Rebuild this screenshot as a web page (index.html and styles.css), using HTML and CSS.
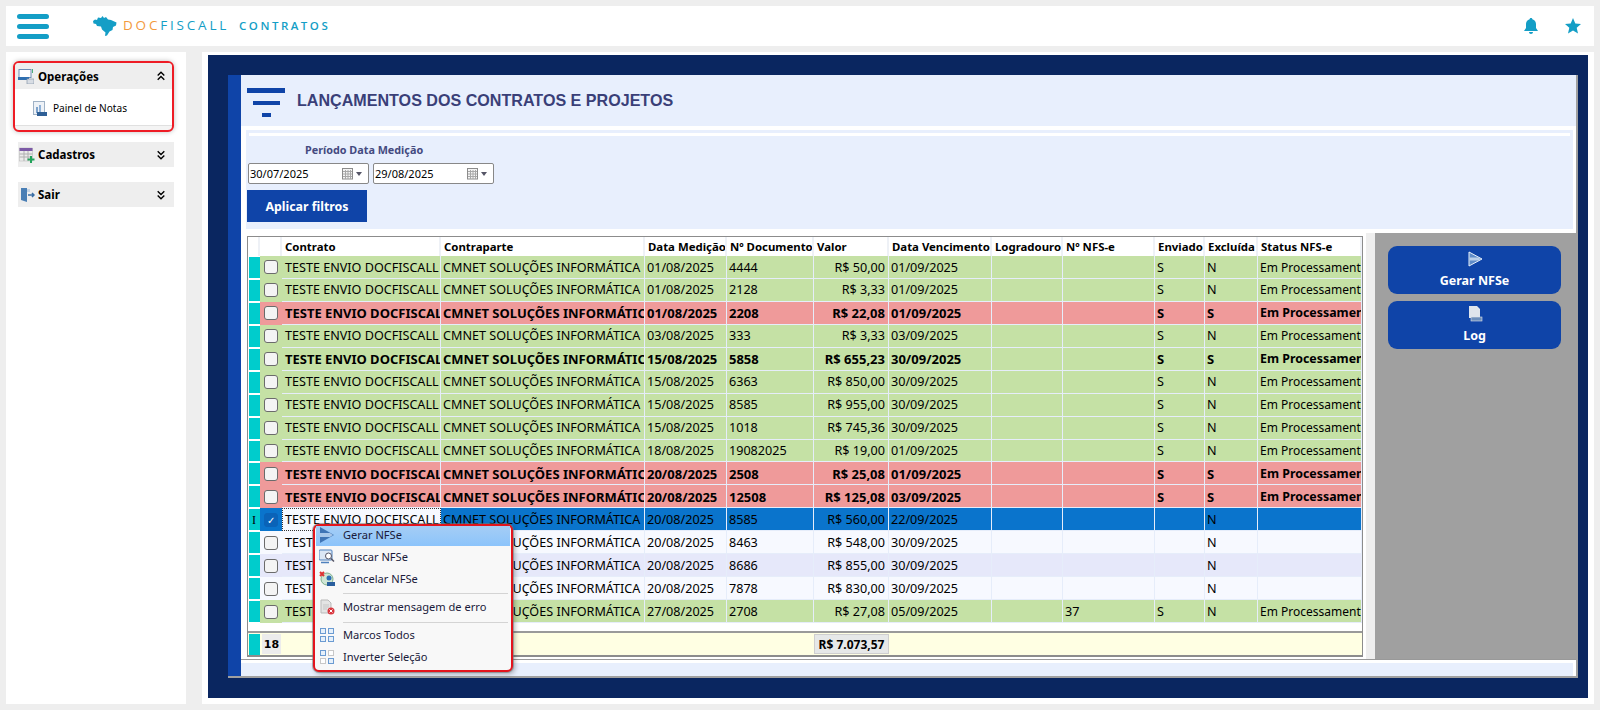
FILE: index.html
```html
<!DOCTYPE html>
<html lang="pt-BR">
<head>
<meta charset="utf-8">
<title>DocFiscall Contratos</title>
<link rel="stylesheet" href="styles.css">
</head>
<body>
<header class="topbar">
  <div class="burger"><span></span><span></span><span></span></div>
  <svg class="brazil" viewBox="0 0 24 20"><path fill="#149ec6" d="M0 5 2 3.500 4 4 5 1.500 8 2 9.500 0 11 2 13 1 15 3.500 18 4 23.500 6.500 23 9.500 20 11 19.500 14 16.500 15.500 14 19.500 12 20 12.500 16.500 9 13.500 8 10.500 4 10 3 8 .5 7.500Z"/></svg>
  <div class="brand"><span class="orange">DOC</span>FISCALL</div>
  <div class="brand sub">CONTRATOS</div>
  <div class="top-icons">
    <svg class="ticon" viewBox="0 0 16 16"><path fill="#149ec6" d="M8 0c.8 0 1.300.5 1.400 1.200C11.600 1.800 13 3.700 13 6v4l2 3H1l2-3V6c0-2.300 1.400-4.200 3.600-4.800C6.700.5 7.200 0 8 0ZM6 14h4c0 1.100-.9 2-2 2s-2-.9-2-2Z"/></svg>
    <svg class="ticon" viewBox="0 0 16 16"><path fill="#149ec6" d="M8 0 10.300 5.400 16 6 11.700 9.800 13 15.600 8 12.600 3 15.600 4.300 9.800 0 6 5.700 5.400Z"/></svg>
  </div>
</header>
<div class="body">
  <aside class="side">
    <div class="side-group">
      <div class="side-head">
        <svg class="sicon" viewBox="0 0 16 16"><rect x="1" y="1.500" width="12" height="8" fill="#fff" stroke="#6f8db5"/><rect x="0" y="9" width="11" height="3" fill="#2f6fb0"/><path stroke="#4caf7a" d="M14.500 1v4"/><rect x="9" y="11" width="7" height="5" fill="#d8dde4" stroke="#8896a8" stroke-width=".7"/></svg>
        <span>Operações</span>
        <svg class="chev" viewBox="0 0 8 10"><path fill="none" stroke="#000" stroke-width="1.400" d="M.7 4.500 4 1.200 7.300 4.500M.7 8.800 4 5.500 7.300 8.800"/></svg>
      </div>
      <div class="side-item">
        <svg class="iicon" viewBox="0 0 14 15"><rect x=".5" y=".5" width="11" height="13" fill="#eef2f7" stroke="#9fb2c6"/><rect x="3" y="6" width="2" height="6" fill="#7ea3cc"/><rect x="6" y="4" width="2" height="8" fill="#8fb2d8"/><rect x="4" y="11" width="10" height="4" fill="#2f5f96"/></svg>
        <span>Painel de Notas</span>
      </div>
    </div>
    <div class="side-head solo">
      <svg class="sicon" viewBox="0 0 16 16"><rect x=".5" y="1" width="13" height="13" fill="#ececec" stroke="#b5b5b5" stroke-width=".5"/><rect x=".5" y="1" width="13" height="3" fill="#7c5aa6"/><path stroke="#b0b0b0" d="M.5 7h13M.5 10h13M5 4v10M9 4v10"/><path stroke="#22a35a" stroke-width="2" d="M12 9v7M8.500 12.500h7"/></svg>
      <span>Cadastros</span>
      <svg class="chev" viewBox="0 0 8 10"><path fill="none" stroke="#000" stroke-width="1.400" d="M.7 1.200 4 4.500 7.300 1.200M.7 5.500 4 8.800 7.300 5.500"/></svg>
    </div>
    <div class="side-head solo">
      <svg class="sicon" viewBox="0 0 16 16"><path fill="#4a7fb5" d="M2 1h6v14l-6-2Z"/><path fill="#c5d5e6" d="M8 2h3v3H8Z"/><path stroke="#3a6ea5" stroke-width="1.500" fill="none" d="M9 8h6M13 6l2 2-2 2"/></svg>
      <span>Sair</span>
      <svg class="chev" viewBox="0 0 8 10"><path fill="none" stroke="#000" stroke-width="1.400" d="M.7 1.200 4 4.500 7.300 1.200M.7 5.500 4 8.800 7.300 5.500"/></svg>
    </div>
  </aside>
  <main class="main">
    <div class="navy">
      <div class="shell">
        <div class="stripe"></div>
        <div class="content">
          <div class="title-bar">
            <div class="funnel"><span></span><span></span><span></span></div>
            <h1>LANÇAMENTOS DOS CONTRATOS E PROJETOS</h1>
          </div>
          <section class="filters">
            <div class="white-line"></div>
            <div class="period">Período Data Medição</div>
            <div class="dates">
              <div class="date"><span>30/07/2025</span><svg class="cal" viewBox="0 0 12 12"><rect x=".5" y=".5" width="10" height="10.500" fill="#f5f5f5" stroke="#8c8c8c"/><path stroke="#a8a8a8" d="M1 3.500h9M1 6h9M1 8.500h9M3.500 2v9M6 2v9M8.500 2v9"/></svg><i class="caret"></i></div>
              <div class="date"><span>29/08/2025</span><svg class="cal" viewBox="0 0 12 12"><rect x=".5" y=".5" width="10" height="10.500" fill="#f5f5f5" stroke="#8c8c8c"/><path stroke="#a8a8a8" d="M1 3.500h9M1 6h9M1 8.500h9M3.500 2v9M6 2v9M8.500 2v9"/></svg><i class="caret"></i></div>
            </div>
            <button class="apply">Aplicar filtros</button>
          </section>
          <div class="work">
            <div class="grid-wrap">
              <div class="grid">
                <div class="row head">
                  <div></div><div></div><div>Contrato</div><div>Contraparte</div><div>Data Medição</div><div>Nº Documento</div><div>Valor</div><div>Data Vencimento</div><div>Logradouro</div><div>Nº NFS-e</div><div>Enviado</div><div>Excluída</div><div>Status NFS-e</div>
                </div>
                <div class="rows" id="rows"></div>
                <div class="row foot">
                  <div class="tl"></div><div class="cnt">18</div><div class="fill"></div><div class="fill"></div><div class="fill"></div><div class="fill"></div><div class="sum">R$ 7.073,57</div><div class="fill"></div>
                </div>
              </div>
            </div>
            <div class="gutter"></div>
            <div class="actions">
              <button class="act">
                <svg class="act-ic" viewBox="0 0 16 16"><path fill="#5f8cc8" stroke="#e8f0fa" d="M2 1 15 8 2 15Z"/><path fill="#b9cee8" d="M2.500 6.500h9l2 1.500-2 1.500h-9Z"/></svg>
                <span>Gerar NFSe</span>
              </button>
              <button class="act">
                <svg class="act-ic" viewBox="0 0 16 16"><path fill="#dfe5ec" d="M2 0h8l3 3v9H2Z"/><rect x="4" y="11" width="11" height="4" fill="#6d8fbb" stroke="#dfe5ec" stroke-width=".6"/></svg>
                <span>Log</span>
              </button>
            </div>
          </div>
          <div class="status-bar"></div>
        </div>
      </div>
    </div>
    <nav class="menu">
      <div class="mi hot"><svg class="mic" viewBox="0 0 16 16"><path fill="#3f74b5" d="M1 0 15 8 1 16Z"/><path fill="#a8c7ea" d="M1 6h10l3 2-3 2H1Z"/></svg><span>Gerar NFSe</span></div>
      <div class="mi"><svg class="mic" viewBox="0 0 16 16"><rect x="0" y="1" width="13" height="10" rx="1" fill="#dbe7f5" stroke="#4f81bd"/><circle cx="9.500" cy="7" r="3" fill="#fff" stroke="#556"/><path stroke="#556" stroke-width="1.500" d="M12 9.500l3 3"/><path stroke="#4f81bd" stroke-width="1.500" d="M2 13.500h8"/></svg><span>Buscar NFSe</span></div>
      <div class="mi"><svg class="mic" viewBox="0 0 16 16"><circle cx="8" cy="8" r="6" fill="#cfe6d5" stroke="#7fb08d"/><path stroke="#d33" stroke-width="2" d="M1 1l4 4M5 1 1 5"/><circle cx="10" cy="7" r="2.500" fill="#2a6fb5"/><rect x="8" y="11" width="8" height="4" fill="#2a5f9e"/></svg><span>Cancelar NFSe</span></div>
      <div class="msep"></div>
      <div class="mi tall"><svg class="mic" viewBox="0 0 16 16"><path fill="#e4e4e4" stroke="#b9b9b9" d="M2 1h7l3 3v10H2Z"/><path stroke="#c5c5c5" d="M4 6h6M4 8h6M4 10h4"/><circle cx="12" cy="12" r="3.500" fill="#d9363e"/><path stroke="#fff" d="M10.500 10.500l3 3M13.500 10.500l-3 3"/></svg><span>Mostrar mensagem de erro</span></div>
      <div class="msep"></div>
      <div class="mi"><svg class="mic" viewBox="0 0 16 16"><g fill="#e6f0fa" stroke="#6b9bd2"><rect x="1.500" y="1.500" width="5" height="5"/><rect x="9.500" y="1.500" width="5" height="5"/><rect x="1.500" y="9.500" width="5" height="5"/><rect x="9.500" y="9.500" width="5" height="5"/></g></svg><span>Marcos Todos</span></div>
      <div class="mi"><svg class="mic" viewBox="0 0 16 16"><rect x="1.500" y="1.500" width="5" height="5" fill="#e6f0fa" stroke="#6b9bd2"/><rect x="9.500" y="1.500" width="5" height="5" fill="#fff" stroke="#c8c8c8"/><rect x="1.500" y="9.500" width="5" height="5" fill="#fff" stroke="#c8c8c8"/><rect x="9.500" y="9.500" width="5" height="5" fill="#e6f0fa" stroke="#6b9bd2"/></svg><span>Inverter Seleção</span></div>
    </nav>
  </main>
</div>
<script src="app.js"></script>
</body>
</html>
```
FILE: app.js
```js
var data = [
  ["g","01/08/2025","4444","50,00","01/09/2025","","S","N",1],
  ["g","01/08/2025","2128","3,33","01/09/2025","","S","N",1],
  ["r b","01/08/2025","2208","22,08","01/09/2025","","S","S",1],
  ["g","03/08/2025","333","3,33","03/09/2025","","S","N",1],
  ["g b","15/08/2025","5858","655,23","30/09/2025","","S","S",1],
  ["g","15/08/2025","6363","850,00","30/09/2025","","S","N",1],
  ["g","15/08/2025","8585","955,00","30/09/2025","","S","N",1],
  ["g","15/08/2025","1018","745,36","30/09/2025","","S","N",1],
  ["g","18/08/2025","19082025","19,00","01/09/2025","","S","N",1],
  ["r b","20/08/2025","2508","25,08","01/09/2025","","S","S",1],
  ["r b","20/08/2025","12508","125,08","03/09/2025","","S","S",1],
  ["sel","20/08/2025","8585","560,00","22/09/2025","","","N",0],
  ["w","20/08/2025","8463","548,00","30/09/2025","","","N",0],
  ["l","20/08/2025","8686","855,00","30/09/2025","","","N",0],
  ["w","20/08/2025","7878","830,00","30/09/2025","","","N",0],
  ["g","27/08/2025","2708","27,08","05/09/2025","37","S","N",1]
];
var html = "";
data.forEach(function (d) {
  var sel = d[0] === "sel";
  html += '<div class="row ' + d[0] + '">' +
    '<div class="tl">' + (sel ? '<b class="ibeam">I</b>' : '') + '</div>' +
    '<div class="ck"><span class="box">' + (sel ? '✓' : '') + '</span></div>' +
    '<div class="c first' + (sel ? ' cur' : '') + '">TESTE ENVIO DOCFISCALL</div>' +
    '<div class="c">CMNET SOLUÇÕES INFORMÁTICA</div>' +
    '<div class="c">' + d[1] + '</div>' +
    '<div class="c">' + d[2] + '</div>' +
    '<div class="c num">R$ ' + d[3] + '</div>' +
    '<div class="c">' + d[4] + '</div>' +
    '<div class="c"></div>' +
    '<div class="c">' + d[5] + '</div>' +
    '<div class="c">' + d[6] + '</div>' +
    '<div class="c">' + d[7] + '</div>' +
    '<div class="c st">' + (d[8] ? 'Em Processamento' : '') + '</div>' +
    '</div>';
});
document.getElementById("rows").innerHTML = html;
```
FILE: styles.css
```css
* { box-sizing: border-box; }
html, body { margin: 0; height: 100%; }
body {
  width: 1600px; height: 710px; overflow: hidden;
  background: #eeeeee;
  padding: 6px 0 0 6px;
  font-family: Tahoma, "Noto Sans", "Open Sans", sans-serif;
  color: #000;
}
.topbar {
  width: 1588px; height: 40px; background: #fff;
  display: flex; align-items: center; position: relative;
}
.burger { width: 32px; margin-left: 11px; display: flex; flex-direction: column; gap: 5px; }
.burger span { display: block; height: 5px; border-radius: 3px; background: #149ec6; }
.brazil { width: 24px; height: 20px; margin-left: 44px; }
.brand {
  font-family: "Open Sans", sans-serif;
  font-size: 13.5px; letter-spacing: 2.8px; color: #149ec6; margin-left: 6px; line-height: 1;
}
.brand .orange { color: #f39a3d; }
.brand.sub { font-size: 11.5px; letter-spacing: 2.5px; margin-left: 10px; font-weight: 600; }
.top-icons { margin-left: auto; display: flex; gap: 26px; margin-right: 13px; }
.ticon { width: 16px; height: 16px; display: block; }

.body { display: flex; margin-top: 6px; }
.side { width: 180px; height: 652px; background: #fff; padding: 9px 12px 0 7px; }
.side-group {
  border: 2px solid #ee1c25; border-radius: 6px; margin-bottom: 10px;
  box-shadow: 0 0 5px rgba(0,0,0,.25);
  height: 71px; width: 161px; background: #f4f4f4; overflow: hidden;
}
.side-head {
  display: flex; align-items: center; height: 26px; background: #eeeeee;
  font-size: 11.5px; font-weight: 700; padding-left: 3px;
}
.side-head .sicon { margin-right: 4px; }
.side-head span { flex: 1; }
.side-head.solo { height: 25px; width: 156px; margin-left: 5px; margin-bottom: 15px; padding-left: 1px; }
.side-head.solo .sicon { margin-right: 3px; }
.sicon { width: 16px; height: 16px; flex: none; }
.iicon { width: 14px; height: 15px; flex: none; }
.chev { width: 8px; height: 10px; margin-right: 9px; flex: none; }
.side-head:not(.solo) .chev { margin-right: 7px; }
.side-item {
  display: flex; align-items: center; gap: 6px; height: 37px; padding: 2px 0 0 18px;
  font-size: 10.1px; border-bottom: 1px solid #e0e0e0; background: #fff;
}

.main { margin-left: 16px; width: 1392px; height: 652px; background: #fff; padding: 3px 0 0 6px; position: relative; }
.navy { width: 1380px; height: 643px; background: #0a2660; padding: 20px 10px 20px 20px; }
.shell { display: flex; height: 603px; background: #a0a0a0; padding: 0 2px 2px 0; }
.stripe { width: 13px; background: #0f44a8; }
.content { flex: 1; background: #fff; display: flex; flex-direction: column; min-width: 0; }
.title-bar { height: 51px; background: #e8effd; display: flex; align-items: center; padding-left: 6px; }
.funnel { width: 38px; display: flex; flex-direction: column; align-items: center; gap: 8px; margin-top: 3px; }
.funnel span { display: block; height: 4px; background: #0f44a8; }
.funnel span:nth-child(1) { width: 38px; height: 5px; }
.funnel span:nth-child(2) { width: 27px; }
.funnel span:nth-child(3) { width: 9px; }
h1 { margin: 0 0 0 12px; font: 700 16.1px "Liberation Sans", Arial, sans-serif; color: #3a3f78; }
.filters { margin: 4px 3px 0 5px; height: 99px; background: #e8effd; padding: 3px 0 0 1px; }
.white-line { height: 3px; background: #fff; margin: 0 3px 0 2px; }
.period { margin: 6px 0 0 58px; font-size: 10.8px; font-weight: 700; color: #444a80; line-height: 16px; height: 16px; }
.dates { display: flex; gap: 4px; margin: 5px 0 0 1px; }
.date {
  width: 121px; height: 21px; background: #fff; border: 1px solid #888; border-radius: 2px;
  display: flex; align-items: center; padding: 0 6px 0 1px; font-size: 11px;
}
.date span { flex: 1; }
.cal { width: 12px; height: 12px; }
.caret { width: 0; height: 0; margin-left: 2px; border: 3.5px solid transparent; border-top: 4px solid #556; border-bottom: 0; }
.apply {
  display: block; width: 120px; height: 32px; margin-top: 6px; border: 0; background: #0f44a8;
  color: #fff; font: 700 12.4px Tahoma, "Noto Sans", sans-serif; padding: 0;
}
.work { display: flex; height: 427px; margin-top: 4px; border-bottom: 1px solid #999; }
.grid-wrap { width: 1125px; background: #fff; padding: 3px 3px 0 6px; }
.grid { height: 421px; border: 1px solid #8c8c8c; border-bottom-width: 2px; display: flex; flex-direction: column; background: #fff; }
.row {
  display: grid;
  grid-template-columns: 12px 22px 159px 204px 82px 87px 75px 103px 71px 92px 50px 53px minmax(0, 1fr);
  font-size: 12.6px; line-height: 1;
}
.row > div { white-space: nowrap; overflow: hidden; }
.head { height: 19px; font-weight: 700; font-size: 11.4px; flex: none; }
.head > div { border-right: 2px solid #eef1f6; padding: 4px 0 0 3px; }
.head > div:nth-child(-n+2) { padding: 0; }
.rows { flex: 1; min-height: 0; }
.row.g, .row.r, .row.w, .row.l, .row.sel { height: 22.94px; }
.tl { background: #00cccc; margin: 1px 0 1px 1px; position: relative; }
.ck { display: flex; align-items: center; justify-content: center; padding-right: 1px; }
.box {
  width: 14px; height: 14px; border: 1px solid #6b6b6b; border-radius: 3px; background: #f4f4f4;
  font-size: 10px; line-height: 12px; text-align: center; display: block;
}
.c { padding: 5.5px 0 0 2px; border-right: 1px solid #e6edfa; border-bottom: 1px solid #e6edfa; }
.first { padding-left: 3px; }
.num { text-align: right; padding-right: 3px; }
.g .ck, .g .c { background: #c5e1a5; }
.r .ck, .r .c { background: #ef9a9a; }
.w .ck, .w .c { background: #f7f9ff; }
.l .ck, .l .c { background: #e6e8fa; }
.sel .ck, .sel .c { background: #0a74cc; }
.sel .box { background: #0a63b8; border-color: #0a63b8; color: #fff; }
.sel .cur { background: #f7f9ff; border: 1px dotted #333; padding: 4.5px 0 0 2px; }
.b { font-weight: 700; font-size: 13px; }
.st { font-size: 12px; }
.b .st { font-size: 12.4px; }
.ibeam { position: absolute; left: 3px; top: 4px; font: 400 12px "Liberation Serif", serif; }
.foot {
  margin-top: auto; height: 24px; flex: none; border-top: 2px solid #9a9a9a;
  background: #ffffe3;
  grid-template-columns: 12px 22px 159px 204px 82px 87px 75px minmax(0, 1fr);
}
.foot .tl { margin: 1px 0 0 1px; }
.cnt { background: #ececec; margin: 1px 1px 1px 2px; font-weight: 700; text-align: center; padding-top: 5px; font-family: "DejaVu Sans", sans-serif; font-size: 11px; }
.sum { background: #e6e8e8; border: 1px solid #cfcfcf; font-weight: 700; padding-top: 4px; margin: 1px 0; text-align: center; font-size: 12px; }
.gutter { width: 9px; background: #eeeeee; }
.actions { flex: 1; background: #a0a0a0; padding: 13px 15px 0 13px; display: flex; flex-direction: column; gap: 7px; }
.act {
  height: 48px; border: 0; border-radius: 9px; background: #0f44a8; color: #fff;
  font: 700 12.5px Tahoma, "Noto Sans", sans-serif; display: flex; flex-direction: column; align-items: center; padding: 5px 0 0;
  gap: 5px;
}
.act-ic { width: 16px; height: 16px; }
.status-bar { margin: 3px 3px 0 0; height: 13px; background: #e8effd; }

.menu {
  position: absolute; left: 111px; top: 472px; width: 200px; height: 148px;
  background: #f8f8f8; border: 2px solid #e3141d; border-radius: 6px;
  box-shadow: 0 0 0 1px rgba(120,120,120,.55), 2px 2px 5px rgba(0,0,0,.3);
  padding: 0 1px;
  font-size: 11.1px;
}
.mi { height: 22px; display: flex; align-items: center; padding: 0 0 4px 27px; position: relative; color: #1a1a3a; }
.mi.hot { height: 20px; background: linear-gradient(#a5cdf5, #8cc4fb); margin-bottom: 1px; }
.mi.tall { height: 24px; }
.mic { position: absolute; left: 3px; top: 50%; margin-top: -9px; width: 16px; height: 16px; }
.msep { height: 1px; background: #d4d4d4; margin: 2px 2px 2px 27px; }
```
